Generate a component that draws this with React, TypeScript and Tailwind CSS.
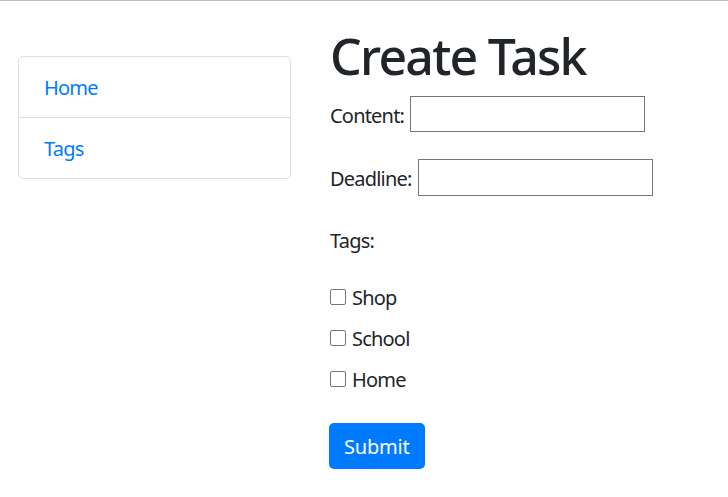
export default function App() {
  const font = { fontFamily: '"Noto Sans", "Open Sans", Arial, sans-serif' };
  return (
    <div
      className="min-h-[497px] w-full bg-white border-t border-[#b6c3cc] text-[20px] leading-[30px] text-[#212529] tracking-[-0.04em]"
      style={font}
    >
      <div className="flex px-[18px]">
        <div className="w-[273px] shrink-0 mt-[55px]">
          <div className="border border-[#dfdfdf] rounded-[5px] flex flex-col">
            <a className="block px-[25px] pt-[16px] pb-[14px] text-[#007bff] border-b border-[#dfdfdf]">Home</a>
            <a className="block px-[25px] pt-[16px] pb-[14px] text-[#007bff]">Tags</a>
          </div>
        </div>
        <div className="ml-[39px] flex flex-col">
          <h1 className="mt-[25px] text-[50px] leading-[60px] font-medium tracking-[-0.035em]">Create Task</h1>
          <div className="mt-[10px] h-[36px] flex items-center">
            <span className="pt-[3px]">Content:</span>
            <span className="ml-[6px] w-[235px] h-[36px] border border-[#767676] bg-white" />
          </div>
          <div className="mt-[27px] h-[37px] flex items-center">
            <span className="pt-[3px]">Deadline:</span>
            <span className="ml-[6px] w-[235px] h-[37px] border border-[#767676] bg-white" />
          </div>
          <div className="mt-[29px] h-[30px] flex items-center pt-[1px]">Tags:</div>
          <div className="mt-[22px] flex flex-col">
            {["Shop", "School", "Home"].map((t, i) => (
              <div key={t} className={`h-[40px] flex items-center ${i > 0 ? "mt-[1px]" : ""}`}>
                <span className="w-[16px] h-[16px] border-[1.5px] border-[#767676] rounded-[2px] bg-white" />
                <span className="ml-[6px] pt-[2px]">{t}</span>
              </div>
            ))}
          </div>
          <div className="mt-[24px] -ml-[1px]">
            <button className="h-[46px] px-[15px] pt-[2px] rounded-[5px] bg-[#007bff] text-white text-[20px] leading-[30px] tracking-[-0.01em]">
              Submit
            </button>
          </div>
        </div>
      </div>
    </div>
  );
}
